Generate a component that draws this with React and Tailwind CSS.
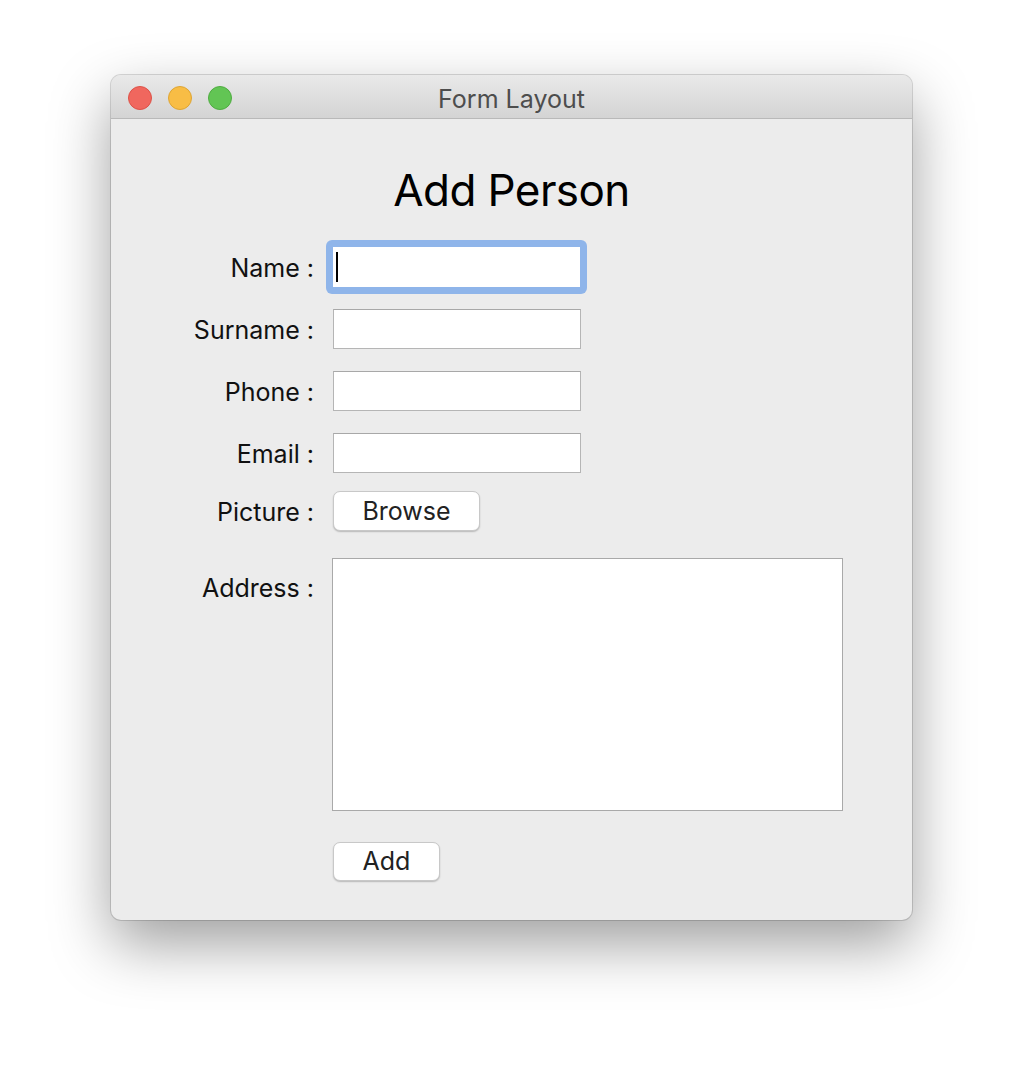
import React from "react";

const font = { fontFamily: "Inter, 'Noto Sans', sans-serif" };

function Label({ children, className = "" }) {
  return (
    <div className={"w-[203px] shrink-0 text-right text-[25px] leading-[25px] pt-[3px] text-[#111] " + className}>
      {children}
    </div>
  );
}

function Field() {
  return <div className="h-[40px] w-[248px] border border-[#b5b5b5] border-t-[#a8a8a8] bg-white" />;
}

export default function App() {
  return (
    <div className="w-[1024px] h-[1068px] bg-white pl-[111px] pt-[75px]" style={font}>
      <div className="w-[801px] h-[845px] rounded-[10px] overflow-hidden bg-[#ececec] flex flex-col shadow-[0_24px_60px_rgba(0,0,0,0.38),0_0_0_1px_rgba(0,0,0,0.14)]">
        {/* title bar */}
        <div className="relative h-[44px] shrink-0 flex items-center justify-center bg-gradient-to-b from-[#e9e9e9] to-[#d4d4d4] border-b border-[#b9b9b9]">
          <div className="absolute left-[17px] top-[11px] flex gap-[16px]">
            <div className="w-[24px] h-[24px] rounded-full bg-[#f0675e] border border-[#dd5248]" />
            <div className="w-[24px] h-[24px] rounded-full bg-[#f8bd45] border border-[#dea534]" />
            <div className="w-[24px] h-[24px] rounded-full bg-[#62c554] border border-[#4fac41]" />
          </div>
          <div className="text-[25px] leading-[25px] pt-[5px] text-[#4d4d4d]">Form Layout</div>
        </div>
        {/* content */}
        <div className="flex flex-col">
          <div className="mt-[48px] h-[46px] flex items-center justify-center text-[44px] leading-[46px] text-black tracking-[-0.6px]">
            Add Person
          </div>
          <div className="mt-[34px] flex items-center gap-[19px]">
            <Label>Name :</Label>
            <div className="relative">
              <div className="absolute -inset-[7px] rounded-[6px] bg-[#8fb5ea]" />
              <div className="relative h-[40px] w-[247px] bg-white flex items-center pl-[3px]">
                <div className="w-[2px] h-[30px] bg-black" />
              </div>
            </div>
          </div>
          <div className="mt-[22px] flex items-center gap-[19px]">
            <Label>Surname :</Label>
            <Field />
          </div>
          <div className="mt-[22px] flex items-center gap-[19px]">
            <Label>Phone :</Label>
            <Field />
          </div>
          <div className="mt-[22px] flex items-center gap-[19px]">
            <Label>Email :</Label>
            <Field />
          </div>
          <div className="mt-[18px] flex items-center gap-[19px]">
            <Label>Picture :</Label>
            <button className="h-[40px] w-[147px] rounded-[7px] bg-white border border-[#c8c8c8] shadow-[0_1px_1.5px_rgba(0,0,0,0.22)] text-[25px] leading-[25px] text-[#222]">
              Browse
            </button>
          </div>
          <div className="mt-[27px] flex items-start gap-[18px]">
            <Label className="mt-[15px]">Address :</Label>
            <div className="h-[253px] w-[511px] bg-white border border-[#a9a9a9]" />
          </div>
          <div className="mt-[31px] flex items-center gap-[19px]">
            <div className="w-[203px] shrink-0" />
            <button className="h-[39px] w-[107px] rounded-[7px] bg-white border border-[#c8c8c8] shadow-[0_1px_1.5px_rgba(0,0,0,0.22)] text-[25px] leading-[25px] text-[#222]">
              Add
            </button>
          </div>
        </div>
      </div>
    </div>
  );
}
